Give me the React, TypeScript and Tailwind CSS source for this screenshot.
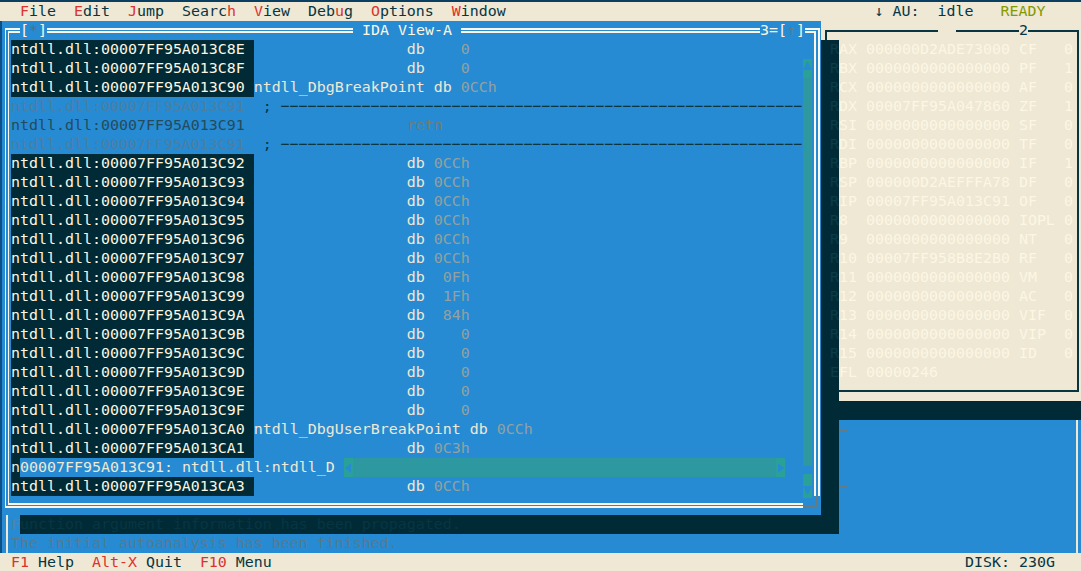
import React from 'react';

// Solarized terminal palette used by the IDA text UI
type Part = { text: string; className?: string };

const MENU: Part[][] = [
  [{ text: 'F', className: 'text-[#dc322f]' }, { text: 'ile' }],
  [{ text: 'E', className: 'text-[#dc322f]' }, { text: 'dit' }],
  [{ text: 'J', className: 'text-[#dc322f]' }, { text: 'ump' }],
  [{ text: 'Searc' }, { text: 'h', className: 'text-[#dc322f]' }],
  [{ text: 'V', className: 'text-[#dc322f]' }, { text: 'iew' }],
  [{ text: 'Deb' }, { text: 'u', className: 'text-[#dc322f]' }, { text: 'g' }],
  [{ text: 'O', className: 'text-[#dc322f]' }, { text: 'ptions' }],
  [{ text: 'W', className: 'text-[#dc322f]' }, { text: 'indow' }],
];

const dbRow = (addr: string, spacing: string, value: string) => ({ addr, spacing, value });

const TOP_ROWS = [
  dbRow('C8E', '    ', '0'),
  dbRow('C8F', '    ', '0'),
];

const MID_ROWS = [
  dbRow('C92', ' ', '0CCh'),
  dbRow('C93', ' ', '0CCh'),
  dbRow('C94', ' ', '0CCh'),
  dbRow('C95', ' ', '0CCh'),
  dbRow('C96', ' ', '0CCh'),
  dbRow('C97', ' ', '0CCh'),
  dbRow('C98', '  ', '0Fh'),
  dbRow('C99', '  ', '1Fh'),
  dbRow('C9A', '  ', '84h'),
  dbRow('C9B', '    ', '0'),
  dbRow('C9C', '    ', '0'),
  dbRow('C9D', '    ', '0'),
  dbRow('C9E', '    ', '0'),
  dbRow('C9F', '    ', '0'),
];

const REGISTERS = [
  ['R', 'AX', '000000D2ADE73000', 'CF  ', '0'],
  ['R', 'BX', '0000000000000000', 'PF  ', '1'],
  ['R', 'CX', '0000000000000000', 'AF  ', '0'],
  ['R', 'DX', '00007FF95A047860', 'ZF  ', '1'],
  ['R', 'SI', '0000000000000000', 'SF  ', '0'],
  ['R', 'DI', '0000000000000000', 'TF  ', '0'],
  ['R', 'BP', '0000000000000000', 'IF  ', '1'],
  ['R', 'SP', '000000D2AEFFFA78', 'DF  ', '0'],
  ['R', 'IP', '00007FF95A013C91', 'OF  ', '0'],
  ['R', '8 ', '0000000000000000', 'IOPL', '0'],
  ['R', '9 ', '0000000000000000', 'NT  ', '0'],
  ['R', '10', '00007FF958B8E2B0', 'RF  ', '0'],
  ['R', '11', '0000000000000000', 'VM  ', '0'],
  ['R', '12', '0000000000000000', 'AC  ', '0'],
  ['R', '13', '0000000000000000', 'VIF ', '0'],
  ['R', '14', '0000000000000000', 'VIP ', '0'],
  ['R', '15', '0000000000000000', 'ID  ', '0'],
  ['E', 'FL', '00000246', '', ''],
];

const DASHES = '−'.repeat(58);

const Addr: React.FC<{ suffix: string }> = ({ suffix }) => (
  <span className="inline-block h-[19px] bg-[#002b36] align-top text-[#fdf6e3]">{`ntdll.dll:00007FF95A013${suffix} `}</span>
);

const DbRow: React.FC<{ addr: string; spacing: string; value: string }> = ({ addr, spacing, value }) => (
  <div className="h-[19px]">
    <Addr suffix={addr} />
    <span className="text-[#eee8d5]">{' '.repeat(17)}db{spacing}</span>
    <span className="text-[#93a1a1]">{value}</span>
  </div>
);

const Divider: React.FC = () => (
  <div className="h-[19px] text-[#4c7ea3]">
    ntdll.dll:00007FF95A013C91
    <span className="text-[#073642]">{'  ; '}{DASHES}</span>
  </div>
);

const Arrow: React.FC<{ dir: 'up' | 'down' | 'left' | 'right' }> = ({ dir }) => {
  const points = {
    up: '4.5,2 9,11 0,11',
    down: '0,2 9,2 4.5,11',
    left: '7,1 7,11 1,6',
    right: '2,1 8,6 2,11',
  }[dir];
  return (
    <svg width="9" height="12" viewBox="0 0 9 12" className="block">
      <polygon points={points} fill="#268bd2" />
    </svg>
  );
};

const MainWindow: React.FC = () => (
  <div className="relative h-[494px] w-[819px] bg-[#268bd2] pl-[3px] pt-[7px]">
    {/* double line frame holds the listing */}
    <div className="h-[480px] w-[815px] border-y-[5px] border-l-[4px] border-r-[6px] border-double border-[#fdf6e3] pl-[2px] pt-[7px]">
      {TOP_ROWS.map((row) => (
        <DbRow key={row.addr} {...row} />
      ))}
      <div className="h-[19px]">
        <Addr suffix="C90" />
        <span className="text-[#eee8d5]">ntdll_DbgBreakPoint db </span>
        <span className="text-[#93a1a1]">0CCh</span>
      </div>
      <Divider />
      <div className="h-[19px] text-[#254a5c]">
        ntdll.dll:00007FF95A013C91
        <span className="text-[#6d7f72]">{' '.repeat(18)}retn</span>
      </div>
      <Divider />
      {MID_ROWS.map((row) => (
        <DbRow key={row.addr} {...row} />
      ))}
      <div className="h-[19px]">
        <Addr suffix="CA0" />
        <span className="text-[#eee8d5]">ntdll_DbgUserBreakPoint db </span>
        <span className="text-[#93a1a1]">0CCh</span>
      </div>
      <DbRow addr="CA1" spacing=" " value="0C3h" />
      <div className="h-[19px] text-[#eee8d5]">
        <span className="inline-block h-[19px] bg-[#002b36] align-top">n</span>00007FF95A013C91: ntdll.dll:ntdll_D
      </div>
      <DbRow addr="CA3" spacing=" " value="0CCh" />
    </div>

    {/* title pieces sit over the frame */}
    <div className="absolute inset-x-0 top-0 flex h-[19px] pl-[18px] pr-[16px] text-[#fdf6e3]">
      <span className="bg-[#268bd2]">
        [<span className="text-[#586e75]">*</span>]
      </span>
      <span className="ml-[306px] bg-[#268bd2]">{' IDA View-A '}</span>
      <span className="ml-auto bg-[#268bd2]">
        3=[<span className="text-[#657b83]">↑</span>]
      </span>
    </div>

    {/* bottom right corner of the frame is the resize grip */}
    <div className="absolute left-[801px] top-[475px] h-[14px] w-[18px] bg-[#268bd2]">
      <div className="h-[11px] w-[15px] border-b-2 border-r-2 border-[#657b83]" />
    </div>

    {/* vertical scrollbar */}
    <div className="absolute left-[801px] top-[38px] flex h-[439px] w-[9px] flex-col">
      <div className="h-[19px] bg-[#2aa198]">
        <Arrow dir="up" />
      </div>
      <div className="flex-1 bg-[#2d98a0]" />
      <div className="h-[8px]" />
      <div className="h-[10px] bg-[#2aa198]" />
      <div className="h-[14px] bg-[#2aa198]">
        <Arrow dir="down" />
      </div>
    </div>

    {/* horizontal scrollbar */}
    <div className="absolute left-[342px] top-[437px] flex h-[19px] w-[441px]">
      <div className="flex w-[9px] items-center bg-[#2aa198]">
        <Arrow dir="left" />
      </div>
      <div className="flex-1 bg-[#2d98a0]" />
      <div className="flex w-[9px] items-center bg-[#2aa198]">
        <Arrow dir="right" />
      </div>
    </div>
  </div>
);

// Shadow column of the main window; the register names run under it
const WindowShadow: React.FC = () => (
  <div className="flex w-[18px] flex-col">
    <div className="h-[19px] bg-[#eee8d5] pl-[4px] pt-[9px]">
      <div className="h-[10px] border-l-2 border-t-2 border-[#073642]" />
    </div>
    <div className="flex-1 bg-[#002b36] pl-[9px] text-[#0b3c49]">
      {REGISTERS.map(([head, rest]) => (
        <div key={head + rest} className="h-[19px]">
          {head}
        </div>
      ))}
    </div>
  </div>
);

const RegisterPanel: React.FC = () => (
  <div className="relative h-[380px] bg-[#eee8d5] pr-[2px] pt-[9px]">
    <div className="h-[362px] border-y-2 border-r-2 border-[#073642] pt-[8px] text-[#fdf6e3]">
      {REGISTERS.map(([head, rest, value, flag, bit]) => (
        <div key={head + rest} className="h-[19px]">
          {rest} {value} {flag} {bit}
        </div>
      ))}
    </div>
    <div className="absolute left-[99px] top-[8px] h-[4px] w-[18px] bg-[#eee8d5]" />
    <span className="absolute left-[180px] top-0 bg-[#eee8d5] text-[#073642]">2</span>
  </div>
);

export default function App() {
  return (
    <div className="flex h-[571px] w-[1081px] flex-col overflow-hidden bg-[#268bd2] font-['DejaVu_Sans_Mono',monospace] text-[14.95px] leading-[19px] whitespace-pre">
      <div className="h-[2px] bg-[#0b3f62]" />

      {/* menu bar */}
      <div className="h-[19px] bg-[#eee8d5] pl-[2px] text-[#073642]">
        {'  '}
        {MENU.map((item, i) => (
          <span key={i}>
            {item.map((part, j) => (
              <span key={j} className={part.className}>
                {part.text}
              </span>
            ))}
            {'  '}
          </span>
        ))}
        {' '.repeat(39)}↓ AU:  idle   <span className="text-[#859900]">READY</span>
      </div>

      <div className="flex flex-1 border-l-2 border-[#0b4f86]">
        {/* main window, its shadow and the message log */}
        <div className="flex w-[837px] flex-col">
          <div className="flex">
            <MainWindow />
            <WindowShadow />
          </div>
          <div className="ml-[4px] flex-1 border-l-2 border-[#eee8d5] pl-[3px]">
            <div className="flex h-[19px]">
              <span className="text-[#5f7f96]">F</span>
              <div className="flex-1 bg-[#002b36] text-[#083542]">
                unction argument information has been propagated.
              </div>
            </div>
            <div className="h-[19px] text-[#557a92]">The initial autoanalysis has been finished.</div>
          </div>
        </div>

        {/* registers, band under them and the lower window edge */}
        <div className="flex flex-1 flex-col">
          <RegisterPanel />
          <div className="h-[19px] bg-[#002b36]" />
          <div className="w-[239px] flex-1 border-r-2 border-[#eee8d5] pt-[9px]">
            <div className="h-[2px] w-[8px] bg-[#657b83]" />
            <div className="mt-[55px] h-[2px] w-[8px] bg-[#657b83]" />
          </div>
        </div>
      </div>

      {/* status bar */}
      <div className="flex h-[18px] justify-between bg-[#eee8d5] pl-[11px] pr-[26px] text-[#073642]">
        <div>
          <span className="text-[#dc322f]">F1</span> Help  <span className="text-[#dc322f]">Alt-X</span> Quit  <span className="text-[#dc322f]">F10</span> Menu
        </div>
        <div>DISK: 230G</div>
      </div>
    </div>
  );
}
